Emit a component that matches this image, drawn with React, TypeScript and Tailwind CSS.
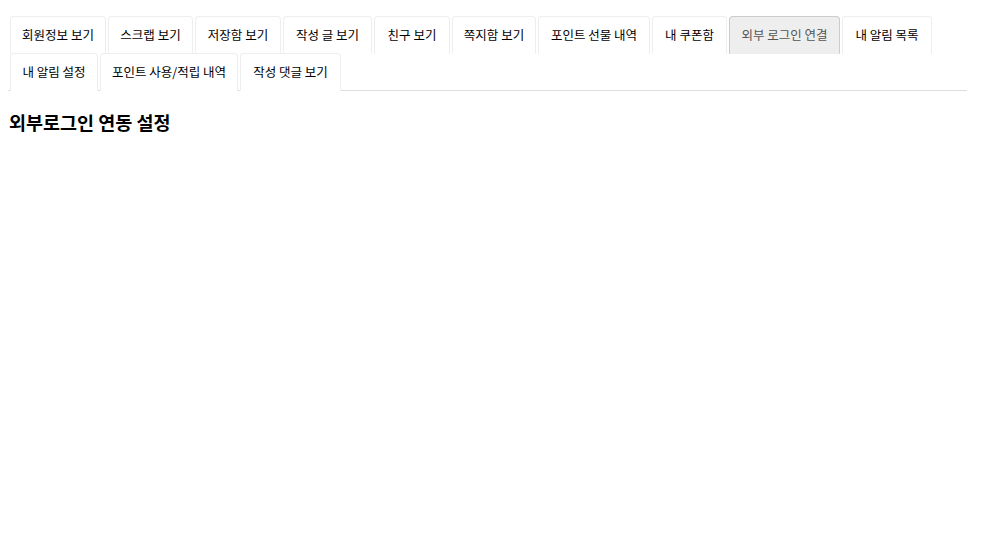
import React from "react";

const tabs = [
  { label: "회원정보 보기", w: "w-[96px]" },
  { label: "스크랩 보기", w: "w-[85px]" },
  { label: "저장함 보기", w: "w-[86px]" },
  { label: "작성 글 보기", w: "w-[89px]" },
  { label: "친구 보기", w: "w-[76px]" },
  { label: "쪽지함 보기", w: "w-[84px]" },
  { label: "포인트 선물 내역", w: "w-[112px]" },
  { label: "내 쿠폰함", w: "w-[75px]" },
  { label: "외부 로그인 연결", w: "w-[111px]" },
  { label: "내 알림 목록", w: "w-[90px]" },
  { label: "내 알림 설정", w: "w-[88px]" },
  { label: "포인트 사용/적립 내역", w: "w-[138px]" },
  { label: "작성 댓글 보기", w: "w-[101px]" },
];

const ACTIVE = "외부 로그인 연결";

export default function App() {
  return (
    <div
      className="min-h-screen bg-white text-[#333]"
      style={{ fontFamily: '"Noto Sans CJK KR", "Noto Sans", sans-serif' }}
    >
      <div className="pt-4 pl-2 w-[967px]">
        {/* Tabs */}
        <ul className="flex flex-wrap pl-[2px] border-b border-[#ddd]">
          {tabs.map((t) => (
            <li key={t.label} className="mr-[2px] -mb-px">
              {t.label === ACTIVE ? (
                <a className={`flex items-center justify-center h-[38px] ${t.w} text-[12.5px] text-[#555] bg-[#eee] border border-[#ccc] border-b-transparent rounded-t-[4px] cursor-default`}>
                  {t.label}
                </a>
              ) : (
                <a className={`flex items-center justify-center h-[38px] ${t.w} text-[12.5px] text-black bg-white border border-[#eee] border-b-transparent rounded-t-[4px] cursor-pointer`}>
                  {t.label}
                </a>
              )}
            </li>
          ))}
        </ul>

        {/* Section title */}
        <h3 className="mt-[18px] pl-[1px] text-[18.5px] font-bold leading-[26px] text-black">
          외부로그인 연동 설정
        </h3>
      </div>
    </div>
  );
}
